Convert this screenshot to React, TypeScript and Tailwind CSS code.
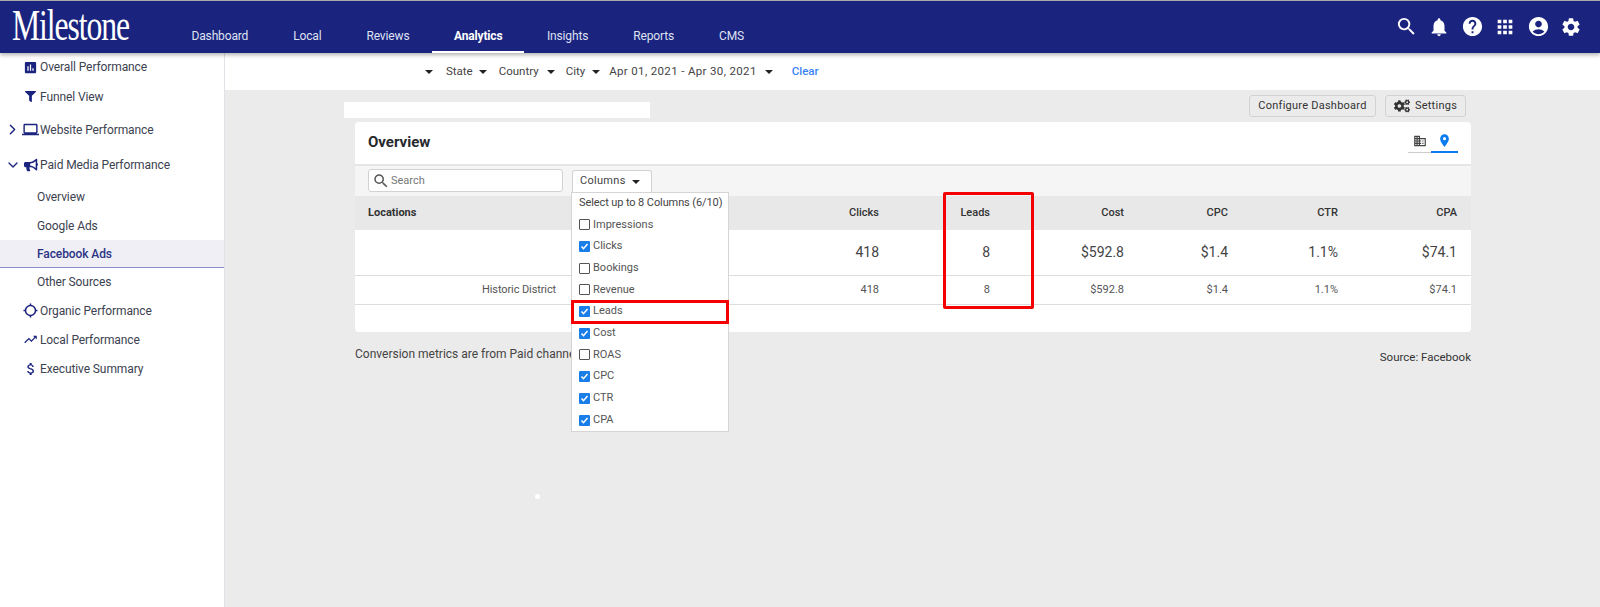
import type { ReactNode } from "react";
import { ChevronDown, ChevronRight } from "lucide-react";
import { FaBullhorn, FaCogs, FaFilter } from "react-icons/fa";
import {
  MdAccountCircle,
  MdApps,
  MdAssessment,
  MdAttachMoney,
  MdBusiness,
  MdHelp,
  MdLaptop,
  MdLocationOn,
  MdNotifications,
  MdSearch,
  MdSettings,
  MdTrendingUp,
} from "react-icons/md";

const navItems = ["Dashboard", "Local", "Reviews", "Analytics", "Insights", "Reports", "CMS"];

const columnOptions = [
  { label: "Impressions", checked: false },
  { label: "Clicks", checked: true },
  { label: "Bookings", checked: false },
  { label: "Revenue", checked: false },
  { label: "Leads", checked: true },
  { label: "Cost", checked: true },
  { label: "ROAS", checked: false },
  { label: "CPC", checked: true },
  { label: "CTR", checked: true },
  { label: "CPA", checked: true },
];

function Caret() {
  return <span className="inline-block h-0 w-0 border-x-[4px] border-t-[4px] border-x-transparent border-t-[#222]" />;
}

function OrganicIcon() {
  return (
    <svg width="15" height="15" viewBox="0 0 15 15" fill="none" stroke="#1a237e" strokeWidth="1.5">
      <circle cx="7.5" cy="7.5" r="5" />
      <path d="M7.5 0.5v2.5M7.5 12v2.5M0.5 7.5h2.5M12 7.5h2.5" />
    </svg>
  );
}

function SideItem({ h, icon, chevron, label, indent }: { h: string; icon: ReactNode; chevron?: ReactNode; label: string; indent: string }) {
  return (
    <div className={`flex items-center text-[12px] tracking-[-0.1px] text-[#3c4250] ${h} ${indent}`}>
      {chevron && <span className="flex w-[19px] items-center justify-center text-[#1a237e]">{chevron}</span>}
      <span className="flex w-[17px] items-center justify-center text-[#1a237e]">{icon}</span>
      <span className="ml-[1px]">{label}</span>
    </div>
  );
}

function SubItem({ h, label, active }: { h: string; label: string; active?: boolean }) {
  return (
    <div
      className={`flex items-center pl-[37px] text-[12px] tracking-[-0.1px] ${h} ${
        active ? "border-b border-[#8c8cc8] bg-[#efeff5] font-medium text-[#2c3385]" : "text-[#3c4250]"
      }`}
    >
      {label}
    </div>
  );
}

function Sidebar() {
  return (
    <aside className="h-full w-[225px] shrink-0 border-r border-[#dfe3e8] bg-white">
      <SideItem h="h-[28px]" indent="pl-[22px]" icon={<MdAssessment size={15} />} label="Overall Performance" />
      <SideItem h="h-[31px]" indent="pl-[22px]" icon={<FaFilter size={11} />} label="Funnel View" />
      <SideItem h="h-[35px]" indent="pl-[3px]" chevron={<ChevronRight size={17} />} icon={<MdLaptop size={17} />} label="Website Performance" />
      <SideItem h="h-[35px]" indent="pl-[3px]" chevron={<ChevronDown size={16} />} icon={<FaBullhorn size={14} />} label="Paid Media Performance" />
      <SubItem h="h-[30px]" label="Overview" />
      <SubItem h="h-[28px]" label="Google Ads" />
      <SubItem h="h-[28px]" label="Facebook Ads" active />
      <SubItem h="h-[28px]" label="Other Sources" />
      <SideItem h="h-[29px]" indent="pl-[22px]" icon={<OrganicIcon />} label="Organic Performance" />
      <SideItem h="h-[29px]" indent="pl-[22px]" icon={<MdTrendingUp size={15} />} label="Local Performance" />
      <SideItem h="h-[29px]" indent="pl-[22px]" icon={<MdAttachMoney size={16} />} label="Executive Summary" />
    </aside>
  );
}

function Header() {
  return (
    <header className="relative z-10 flex h-[53px] shrink-0 items-stretch border-t border-[#a9a9a9] bg-[#1a237e] shadow-[0_2px_4px_rgba(0,0,0,0.3)]">
      <div className="w-[169px] shrink-0 pl-[12px] pt-[3px]">
        <span className="inline-block origin-left scale-x-[0.72] font-['Liberation_Serif',serif] text-[44px] leading-[44px] tracking-[-1.5px] text-white">
          Milestone
        </span>
      </div>
      <nav className="flex">
        {navItems.map((item) => (
          <div
            key={item}
            className={`flex items-center pt-[19px] text-[12px] tracking-[-0.15px] ${
              item === "Analytics" ? "border-b-2 border-white px-[22px] font-bold text-white" : "border-b-2 border-transparent px-[22.5px] text-[#dfe1f2]"
            }`}
          >
            {item}
          </div>
        ))}
      </nav>
      <div className="ml-auto flex items-center gap-[10.5px] pr-[18px] pb-[1px] text-white">
        <MdSearch size={23} />
        <MdNotifications size={22} />
        <MdHelp size={23} />
        <MdApps size={22} />
        <MdAccountCircle size={23} />
        <MdSettings size={22} />
      </div>
    </header>
  );
}

function FilterBar() {
  return (
    <div className="flex h-[37px] shrink-0 items-center bg-white pl-[200px] text-[11.5px] text-[#444]">
      <Caret />
      <span className="ml-[13px]">State</span>
      <span className="ml-[6px] flex"><Caret /></span>
      <span className="ml-[12px]">Country</span>
      <span className="ml-[8px] flex"><Caret /></span>
      <span className="ml-[11px]">City</span>
      <span className="ml-[7px] flex"><Caret /></span>
      <span className="ml-[9px] tracking-[0.35px]">Apr 01, 2021 - Apr 30, 2021</span>
      <span className="ml-[8px] flex"><Caret /></span>
      <span className="ml-[19px] font-medium text-[#3b82f6]">Clear</span>
    </div>
  );
}

function Checkbox({ checked }: { checked: boolean }) {
  if (!checked) return <span className="h-[11px] w-[11px] rounded-[1px] border-[1.5px] border-[#555] bg-white" />;
  return (
    <span className="flex h-[11px] w-[11px] items-center justify-center rounded-[1px] bg-[#1a7ee8]">
      <svg width="9" height="9" viewBox="0 0 9 9" fill="none" stroke="white" strokeWidth="1.5">
        <path d="M1.5 4.5l2 2.2 4-4.7" />
      </svg>
    </span>
  );
}

function ColumnsMenu() {
  return (
    <div className="absolute left-[216px] top-[26px] z-20 h-[240px] w-[158px] border border-[#d5d5d5] bg-white pl-[7px] text-[11px] text-[#555]">
      <div className="flex h-[21px] items-center whitespace-nowrap tracking-[-0.1px] text-[#444]">Select up to 8 Columns (6/10)</div>
      {columnOptions.map((option) => (
        <div key={option.label} className="relative flex h-[21.7px] items-center gap-[3px]">
          <Checkbox checked={option.checked} />
          <span>{option.label}</span>
          {option.label === "Leads" && <span className="absolute -left-[8px] -right-[1px] top-[-1px] h-[24px] border-[3px] border-[#f40000]" />}
        </div>
      ))}
    </div>
  );
}

const tableCols = "grid grid-cols-[1fr_60px_111px_134px_104px_110px_119px] items-center pr-[14px] text-right";

function OverviewCard() {
  return (
    <section className="relative mt-[4px] h-[210px] rounded-[4px] bg-white">
      <div className="flex h-[44px] items-center justify-between border-b-2 border-[#e6e6e6] px-[13px]">
        <h2 className="pb-[2px] text-[15px] font-bold text-[#26282c]">Overview</h2>
        <div className="flex h-[31px] items-center self-start pt-[7px]">
          <span className="flex h-[24px] w-[23px] items-center justify-center border-b border-[#ccc] text-[#444]"><MdBusiness size={14} /></span>
          <span className="flex h-[24px] w-[27px] items-center justify-center border-b-2 border-[#0a7cf0] text-[#0a7cf0]"><MdLocationOn size={15} /></span>
        </div>
      </div>
      <div className="relative flex h-[30px] items-start bg-[#f5f5f5] pl-[13px] pt-[3px]">
        <div className="flex h-[23px] w-[195px] items-center rounded-[3px] border border-[#d2d2d2] bg-white pl-[3px] pt-[1px] text-[11px] text-[#777]">
          <MdSearch size={18} className="text-[#555]" />
          <span className="ml-[1px]">Search</span>
        </div>
        <div className="ml-[9px] mt-[1px] flex h-[22px] w-[80px] items-center gap-[6px] rounded-t-[3px] border border-b-0 border-[#d2d2d2] bg-white pl-[7px] text-[11px] tracking-[0.3px] text-[#444]">
          Columns
          <Caret />
        </div>
        <ColumnsMenu />
      </div>
      <div className={`${tableCols} h-[34px] bg-[#e8e8e8] pt-[1px] text-[11px] font-medium text-[#333]`}>
        <span className="pl-[13px] text-left font-bold">Locations</span>
        <span>Clicks</span>
        <span>Leads</span>
        <span>Cost</span>
        <span>CPC</span>
        <span>CTR</span>
        <span>CPA</span>
      </div>
      <div className={`${tableCols} h-[46px] border-b border-[#dddddd] text-[14px] text-[#444]`}>
        <span />
        <span>418</span>
        <span>8</span>
        <span>$592.8</span>
        <span>$1.4</span>
        <span>1.1%</span>
        <span>$74.1</span>
      </div>
      <div className={`${tableCols} h-[29px] border-b border-[#dddddd] pt-[1px] text-[11px] text-[#555]`}>
        <span className="pl-[127px] text-left tracking-[-0.1px]">Historic District</span>
        <span>418</span>
        <span>8</span>
        <span>$592.8</span>
        <span>$1.4</span>
        <span>1.1%</span>
        <span>$74.1</span>
      </div>
      <span className="absolute left-[588px] top-[70px] h-[117px] w-[91px] rounded-[2px] border-[3px] border-[#f40000]" />
    </section>
  );
}

export default function App() {
  return (
    <div className="flex h-[607px] w-[1600px] flex-col overflow-hidden bg-white font-['Roboto',sans-serif]">
      <Header />
      <div className="flex min-h-0 flex-1">
        <Sidebar />
        <main className="relative flex min-w-0 flex-1 flex-col bg-[#ebebeb]">
          <FilterBar />
          <div className="pl-[130px] pr-[129px] pt-[5px]">
            <div className="flex justify-between">
              <div className="-ml-[11px] mt-[7px] h-[16px] w-[306px] bg-white" />
              <div className="flex gap-[9px] pr-[5px]">
                <div className="flex h-[22px] w-[127px] items-center justify-center rounded-[3px] border border-[#d2d2d2] text-[11px] tracking-[0.25px] text-[#333]">
                  Configure Dashboard
                </div>
                <div className="flex h-[22px] w-[81px] items-center justify-center gap-[5px] rounded-[3px] border border-[#d2d2d2] text-[11px] tracking-[0.25px] text-[#333]">
                  <FaCogs size={16} />
                  Settings
                </div>
              </div>
            </div>
            <OverviewCard />
            <div className="mt-[13px] text-[12px] text-[#444]">Conversion metrics are from Paid channel</div>
            <div className="mt-[-14px] text-right text-[11.5px] text-[#333]">Source: Facebook</div>
          </div>
          <span className="absolute left-[310px] top-[441px] h-[5px] w-[5px] rounded-full bg-white" />
        </main>
      </div>
    </div>
  );
}
